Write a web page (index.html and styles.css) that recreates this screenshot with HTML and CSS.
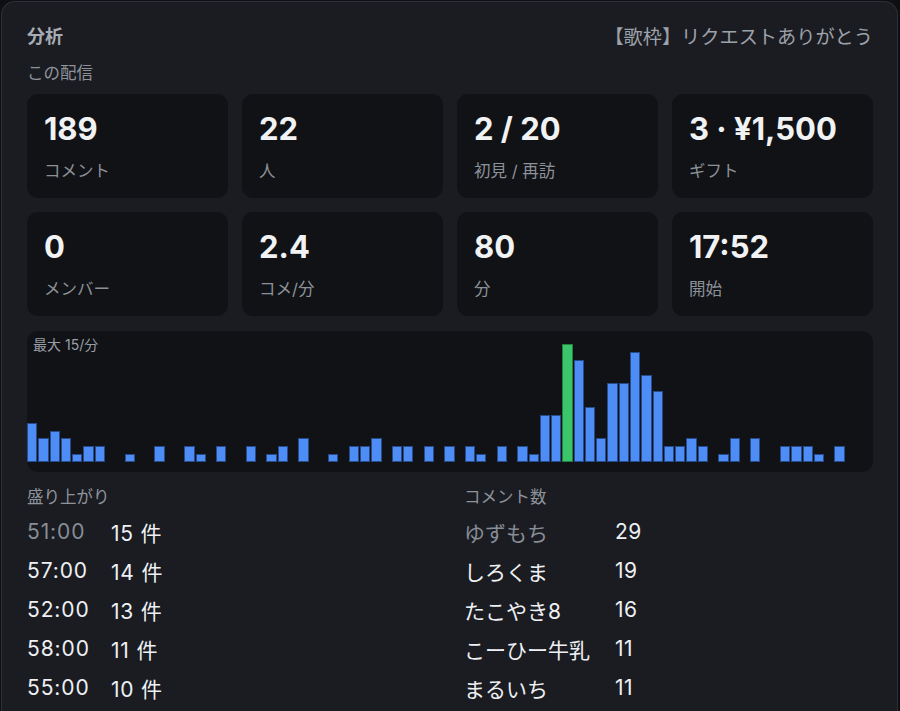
FILE: index.html
```html
<!DOCTYPE html>
<html lang="ja">
<head>
<meta charset="utf-8">
<title>分析</title>
<link rel="stylesheet" href="styles.css">
</head>
<body>
<section class="panel">
  <header class="head">
    <h1 class="title">分析</h1>
    <div class="stream">【歌枠】リクエストありがとう</div>
  </header>
  <div class="sub">この配信</div>

  <div class="cards">
    <div class="card"><div class="num">189</div><div class="lbl">コメント</div></div>
    <div class="card"><div class="num">22</div><div class="lbl">人</div></div>
    <div class="card"><div class="num">2 / 20</div><div class="lbl">初見 / 再訪</div></div>
    <div class="card"><div class="num">3 · ¥1,500</div><div class="lbl">ギフト</div></div>
    <div class="card"><div class="num">0</div><div class="lbl">メンバー</div></div>
    <div class="card"><div class="num">2.4</div><div class="lbl">コメ/分</div></div>
    <div class="card"><div class="num">80</div><div class="lbl">分</div></div>
    <div class="card"><div class="num">17:52</div><div class="lbl">開始</div></div>
  </div>

  <div class="chart">
    <div class="max">最大 15/分</div>
    <div class="bars">
      <i class="bar" style="height:39.3px"></i>
      <i class="bar" style="height:23.6px"></i>
      <i class="bar" style="height:31.5px"></i>
      <i class="bar" style="height:23.6px"></i>
      <i class="bar" style="height:7.9px"></i>
      <i class="bar" style="height:15.7px"></i>
      <i class="bar" style="height:15.7px"></i>
      <i class="slot"></i>
      <i class="slot"></i>
      <i class="bar" style="height:7.9px"></i>
      <i class="slot"></i>
      <i class="slot"></i>
      <i class="bar" style="height:15.7px"></i>
      <i class="slot"></i>
      <i class="slot"></i>
      <i class="bar" style="height:15.7px"></i>
      <i class="bar" style="height:7.9px"></i>
      <i class="slot"></i>
      <i class="bar" style="height:15.7px"></i>
      <i class="slot"></i>
      <i class="slot"></i>
      <i class="bar" style="height:15.7px"></i>
      <i class="slot"></i>
      <i class="bar" style="height:7.9px"></i>
      <i class="bar" style="height:15.7px"></i>
      <i class="slot"></i>
      <i class="bar" style="height:23.6px"></i>
      <i class="slot"></i>
      <i class="slot"></i>
      <i class="bar" style="height:7.9px"></i>
      <i class="slot"></i>
      <i class="bar" style="height:15.7px"></i>
      <i class="bar" style="height:15.7px"></i>
      <i class="bar" style="height:23.6px"></i>
      <i class="slot"></i>
      <i class="bar" style="height:15.7px"></i>
      <i class="bar" style="height:15.7px"></i>
      <i class="slot"></i>
      <i class="bar" style="height:15.7px"></i>
      <i class="slot"></i>
      <i class="bar" style="height:15.7px"></i>
      <i class="slot"></i>
      <i class="bar" style="height:15.7px"></i>
      <i class="bar" style="height:7.9px"></i>
      <i class="slot"></i>
      <i class="bar" style="height:15.7px"></i>
      <i class="slot"></i>
      <i class="bar" style="height:15.7px"></i>
      <i class="bar" style="height:7.9px"></i>
      <i class="bar" style="height:47.2px"></i>
      <i class="bar" style="height:47.2px"></i>
      <i class="bar peak" style="height:118px"></i>
      <i class="bar" style="height:102.3px"></i>
      <i class="bar" style="height:55.1px"></i>
      <i class="bar" style="height:23.6px"></i>
      <i class="bar" style="height:78.7px"></i>
      <i class="bar" style="height:78.7px"></i>
      <i class="bar" style="height:110.2px"></i>
      <i class="bar" style="height:86.6px"></i>
      <i class="bar" style="height:70.8px"></i>
      <i class="bar" style="height:15.7px"></i>
      <i class="bar" style="height:15.7px"></i>
      <i class="bar" style="height:23.6px"></i>
      <i class="bar" style="height:15.7px"></i>
      <i class="slot"></i>
      <i class="bar" style="height:7.9px"></i>
      <i class="bar" style="height:23.6px"></i>
      <i class="slot"></i>
      <i class="bar" style="height:23.6px"></i>
      <i class="slot"></i>
      <i class="slot"></i>
      <i class="bar" style="height:15.7px"></i>
      <i class="bar" style="height:15.7px"></i>
      <i class="bar" style="height:15.7px"></i>
      <i class="bar" style="height:7.9px"></i>
      <i class="slot"></i>
      <i class="bar" style="height:15.7px"></i>
      <i class="slot"></i>
      <i class="slot"></i>
      <i class="slot"></i>
    </div>
  </div>

  <div class="lists">
    <div class="list">
      <div class="list-title">盛り上がり</div>
      <div class="row"><span class="key time dim">51:00</span><span class="val">15 件</span></div>
      <div class="row"><span class="key time">57:00</span><span class="val">14 件</span></div>
      <div class="row"><span class="key time">52:00</span><span class="val">13 件</span></div>
      <div class="row"><span class="key time">58:00</span><span class="val">11 件</span></div>
      <div class="row"><span class="key time">55:00</span><span class="val">10 件</span></div>
    </div>
    <div class="list">
      <div class="list-title">コメント数</div>
      <div class="row"><span class="key name dim">ゆずもち</span><span class="val count">29</span></div>
      <div class="row"><span class="key name">しろくま</span><span class="val count">19</span></div>
      <div class="row"><span class="key name">たこやき8</span><span class="val count">16</span></div>
      <div class="row"><span class="key name">こーひー牛乳</span><span class="val count">11</span></div>
      <div class="row"><span class="key name">まるいち</span><span class="val count">11</span></div>
    </div>
  </div>
</section>
</body>
</html>
```

FILE: styles.css
```css
html, body {
  margin: 0;
  padding: 0;
  overflow: hidden;
  background: #0e0f12;
}

body {
  font-family: "Inter", "Noto Sans CJK JP", sans-serif;
  color: #eef0f3;
}

.panel {
  margin: 1px 2px 0 1px;
  border: 1px solid #2c2f37;
  border-bottom: none;
  border-radius: 14px 14px 0 0;
  background: #1a1c22;
  padding: 22px 24px 60px 25px;
}

.head {
  display: flex;
  justify-content: space-between;
  align-items: center;
  height: 26px;
}

.title {
  margin: 0;
  font-size: 18px;
  font-weight: 700;
  line-height: 26px;
  color: #a7abb3;
}

.stream {
  font-size: 19.2px;
  line-height: 26px;
  color: #9da1a9;
  margin-right: 0;
}

.sub {
  margin-top: 12px;
  font-size: 16.5px;
  line-height: 22px;
  color: #8e939b;
}

.cards {
  margin-top: 10px;
  display: grid;
  grid-template-columns: repeat(4, 1fr);
  gap: 14px;
}

.card {
  background: #111216;
  border-radius: 11px;
  padding: 17px 17px 16px;
  height: 104px;
  box-sizing: border-box;
}

.num {
  font-size: 31px;
  font-weight: 700;
  line-height: 36px;
  color: #f1f2f4;
}

.lbl {
  margin-top: 13px;
  font-size: 16.5px;
  line-height: 22px;
  color: #8c9199;
}

.chart {
  position: relative;
  margin-top: 15px;
  background: #111216;
  border-radius: 11px;
  height: 141px;
  box-sizing: border-box;
  padding-bottom: 10px;
}

.max {
  position: absolute;
  left: 6px;
  top: 4px;
  font-size: 14px;
  line-height: 20px;
  color: #9a9ea6;
}

.bars {
  display: flex;
  align-items: flex-end;
  height: 131px;
}

.bars .bar,
.bars .slot {
  flex: 1 1 0;
  min-width: 0;
  margin-right: 1px;
  box-sizing: border-box;
}

.bars .bar {
  background: #4f8df6;
  border: 1px solid #274c8c;
}

.bars .bar.peak {
  background: #3cc66b;
  border-color: #24803f;
}

.lists {
  margin-top: 14px;
  display: grid;
  grid-template-columns: 1fr 1fr;
  column-gap: 28px;
}

.list-title {
  font-size: 16.5px;
  line-height: 22px;
  color: #8e939b;
  margin-bottom: 4px;
}

.row {
  display: flex;
  align-items: center;
  height: 39px;
  font-size: 21px;
  color: #eef0f3;
}

.key.time {
  width: 84px;
  letter-spacing: 0.9px;
}

.val {
  letter-spacing: 0.8px;
}

.val.count {
  letter-spacing: 0.4px;
}

.key.name {
  width: 151px;
}

.dim {
  color: #878c95;
}
```
